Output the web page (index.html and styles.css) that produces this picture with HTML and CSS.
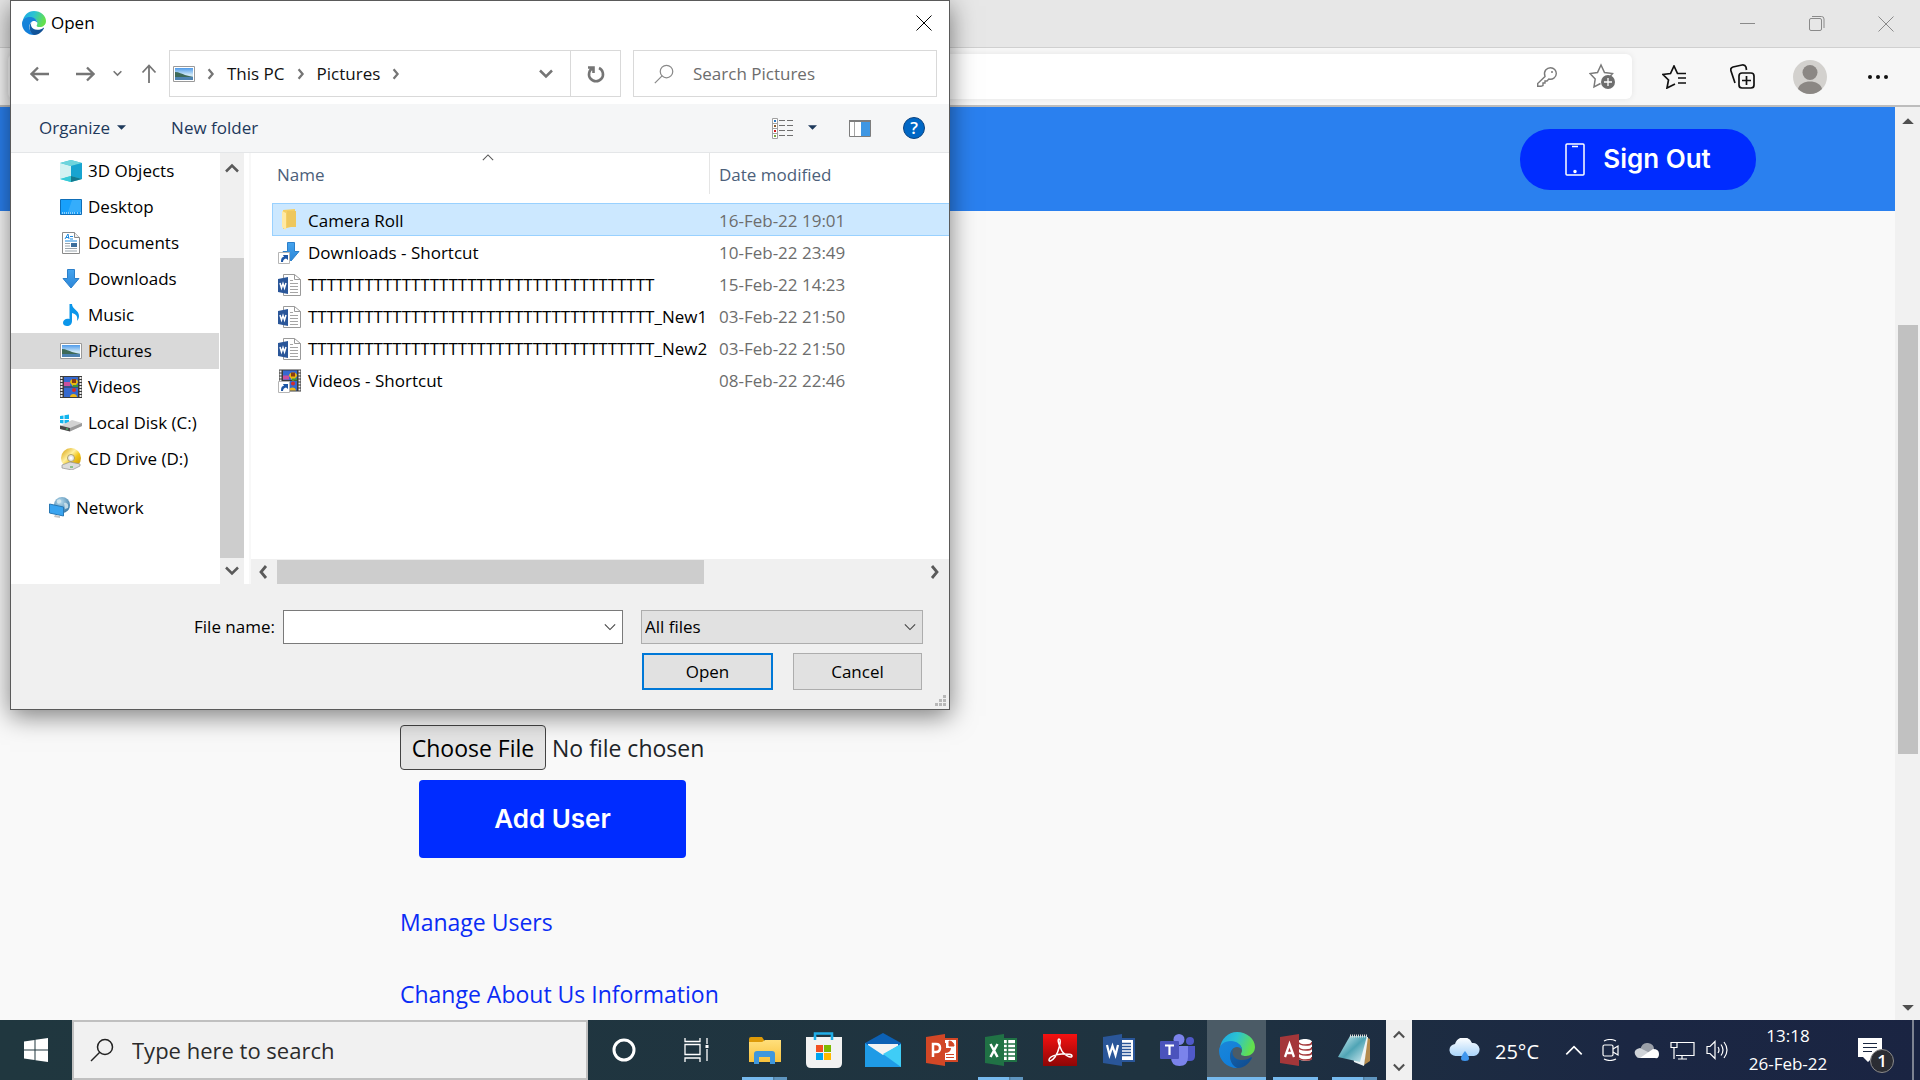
FILE: index.html
```html
<!DOCTYPE html>
<html lang="en">
<head>
<meta charset="utf-8">
<title>Add User</title>
<link rel="stylesheet" href="styles.css">
</head>
<body>
<svg class="defs" width="0" height="0" aria-hidden="true">
  <defs>
    <linearGradient id="gEdgeTop" x1="0" y1="0" x2="1" y2="0.3"><stop offset="0" stop-color="#1ba4e6"/><stop offset=".5" stop-color="#2bc3d2"/><stop offset="1" stop-color="#63e04e"/></linearGradient>
    <linearGradient id="gEdgeMid" x1="0" y1="0" x2=".6" y2="1"><stop offset="0" stop-color="#1a86d8"/><stop offset="1" stop-color="#0f7ddb"/></linearGradient>
    <linearGradient id="gEdgeLow" x1="0" y1="0" x2="1" y2="1"><stop offset="0" stop-color="#1263b0"/><stop offset="1" stop-color="#114a8b"/></linearGradient>
    <linearGradient id="gSky" x1="0" y1="0" x2="0" y2="1"><stop offset="0" stop-color="#4f9bea"/><stop offset=".6" stop-color="#d5ecf8"/><stop offset="1" stop-color="#5d8fb8"/></linearGradient>
    <linearGradient id="gBlue" x1="0" y1="0" x2="0" y2="1"><stop offset="0" stop-color="#45a4ee"/><stop offset="1" stop-color="#2b86d8"/></linearGradient>
    <linearGradient id="gFolder" x1="0" y1="0" x2="0" y2="1"><stop offset="0" stop-color="#ffdf7c"/><stop offset="1" stop-color="#f9c23c"/></linearGradient>
    <linearGradient id="gRed" x1="0" y1="0" x2="0" y2="1"><stop offset="0" stop-color="#f51111"/><stop offset="1" stop-color="#8e0606"/></linearGradient>
    <linearGradient id="gCloud" x1="0" y1="0" x2="0" y2="1"><stop offset="0" stop-color="#ffffff"/><stop offset="1" stop-color="#a9d4fa"/></linearGradient>
    <linearGradient id="gNote" x1="0" y1="0" x2="1" y2="1"><stop offset="0" stop-color="#d5f0f5"/><stop offset=".5" stop-color="#4fa4b5"/><stop offset="1" stop-color="#d8eff4"/></linearGradient>
    <linearGradient id="gDisc" x1="0" y1="0" x2="1" y2="1"><stop offset="0" stop-color="#d49a00"/><stop offset=".4" stop-color="#fff0a0"/><stop offset=".6" stop-color="#f2c71c"/><stop offset="1" stop-color="#c38a00"/></linearGradient>
    <radialGradient id="gGlobe" cx=".4" cy=".3" r=".8"><stop offset="0" stop-color="#b8dcee"/><stop offset="1" stop-color="#2d6f9e"/></radialGradient>
  </defs>
  <symbol id="edge" viewBox="0 0 36 36">
    <path d="M1 16C2 7 9 0 18 0c10 0 18 7 18 15 0 6-5 9-9 9-4 0-5-1-5-2 0-1 1-1 1-4 0-5-5-8-11-8C7 10 3 12 1 16z" fill="url(#gEdgeTop)"/>
    <path d="M0 19c0-6 5-10 12-10 6 0 11 4 11 9-1-2-3-3-5-3-4 0-7 4-7 9 0 6 4 11 11 12-1 0-2 0-4 0C8 36 0 28 0 19z" fill="url(#gEdgeMid)"/>
    <path d="M15 16c-3 3-2 12 8 12 4 0 7-1 9-3 1 0 1 1 1 1-2 4-7 10-14 10C12 35 8 22 15 16z" fill="url(#gEdgeLow)"/>
  </symbol>
  <symbol id="picture" viewBox="0 0 22 16">
    <path d="M.5.5h21v15H.5z" fill="#fff" stroke="#9a9a9a"/>
    <path d="M2 2h18v12H2z" fill="url(#gSky)"/>
    <path d="M2 6c4 0 7 2 10 3l8 2v1H2z" fill="#3e6a58"/><path d="M2 11h18v3H2z" fill="#4d82b0"/>
  </symbol>
  <symbol id="objects" viewBox="0 0 22 22">
    <path d="M0 3l11-3 11 3v16l-11 3-11-3z" fill="#35c6d6"/>
    <path d="M0 3l5 2v13l-5 1z" fill="#a9e6ea"/><path d="M0 3l11 3v10L0 19z" fill="#d3f2f2"/><path d="M0 3l11-3 11 3-11 3z" fill="#6fd4dc"/>
    <path d="M11 6l11-3v16l-11-3z" fill="#18a4d0"/><path d="M0 19l11-3v6z" fill="#37cbd8"/><path d="M11 16l11 3-11 3z" fill="#14798f"/>
  </symbol>
  <symbol id="desktop" viewBox="0 0 22 16">
    <path d="M.5.5h21v15H.5z" fill="#18a0fb" stroke="#0f6eb8"/><path d="M12 1h9v12L8 13z" fill="#4ab5fc" opacity=".6"/><path d="M2 14h14M17 14h2M20 14h1" stroke="#fff" stroke-dasharray="1 1"/>
  </symbol>
  <symbol id="document" viewBox="0 0 18 22">
    <path d="M.5.5h12l5 5v16H.5z" fill="#fff" stroke="#8a8a8a"/><path d="M12.500.5v5h5" fill="#eee" stroke="#8a8a8a"/>
    <path d="M3 7l3-5 1 5M4 5.500h3M8 4.500h3M8 7h3M3 9h12" stroke="#1d8be0" fill="none"/>
    <path d="M3 11.500h5M3 14h5M3 16.500h12M3 19h12" stroke="#9aa5ad"/><path d="M9 11h6v4H9z" fill="#3c6f9d"/>
  </symbol>
  <symbol id="download" viewBox="0 0 18 20">
    <path d="M5.500.5h7v9H17L9 19 1 9.500h4.500z" fill="url(#gBlue)" stroke="#2b7fca"/>
  </symbol>
  <symbol id="music" viewBox="0 0 16 22">
    <path d="M6.500 0h2.500c0 5 7 6 7 12 0 2-1 4-2 5 1-5-1-7-5-8v8c0 3-2 5-5 5-2 0-4-1-4-3 0-3 3-5 6.500-4z" fill="#0b96ea"/>
  </symbol>
  <symbol id="video" viewBox="0 0 22 22">
    <path d="M0 0h22v22H0z" fill="#3b3b3b"/><path d="M4 1h14v9.500H4zM4 11.500h14V21H4z" fill="#3569cf"/>
    <path d="M1.500 1v20M20.500 1v20" stroke="#eee" stroke-width="2" stroke-dasharray="2 1"/>
    <path d="M10 6c0-4 8-4 8 0 0 2-3 3-3 5h-2c0-2-3-3-3-5z" fill="#e8b90f"/><path d="M12 3h4v4h-4z" fill="#8a3b13"/>
    <path d="M4 6h6v4H4z" fill="#c9509e"/><path d="M13 9h5v2h-5z" fill="#3c9a37"/><circle cx="14" cy="14" r="2" fill="#d32d2d"/><path d="M10 21c0-4 7-4 7 0z" fill="#efb716"/>
  </symbol>
  <symbol id="disk" viewBox="0 0 22 18">
    <path d="M0 2l3.500-.5v3.500H0zM4.500 1.300L9 .5V5H4.500zM0 6h3.500v3.500L0 9zM4.500 6H9v4l-4.500-.500z" fill="#13b5ee"/>
    <path d="M0 12l12-6 10 3v3L10 17 0 15z" fill="#d3d3d3"/><path d="M0 11.500l10 2.500v3.500L0 15z" fill="#4a4a4a"/><path d="M10 14l12-5v3l-12 5.500z" fill="#9b9b9b"/><path d="M6 15h2" stroke="#46d36e"/>
  </symbol>
  <symbol id="disc" viewBox="0 0 22 22">
    <circle cx="11" cy="10" r="10" fill="url(#gDisc)"/><circle cx="11" cy="10" r="3.500" fill="#e8e8e8" stroke="#b0a060"/><circle cx="11" cy="10" r="1.500" fill="#fff"/>
    <path d="M2 17l8-3 10 2v2l-8 4-10-2z" fill="#dcdcdc" stroke="#8f8f8f" stroke-width=".7"/><path d="M10 19h3" stroke="#3ca63c"/>
  </symbol>
  <symbol id="network" viewBox="0 0 22 22">
    <circle cx="13" cy="8" r="8" fill="url(#gGlobe)"/><path d="M8 3c3-2 5 0 4 2S7 8 8 3zM15 6c3-1 5 2 4 5l-3 1z" fill="#d7e9ef" opacity=".8"/>
    <path d="M.5 7l14 3v9L.5 16z" fill="#39a4f0" stroke="#2878b4"/><path d="M6 18l5 1v2l-6-1z" fill="#c4c4c4"/>
  </symbol>
  <symbol id="folder" viewBox="0 0 23 23">
    <path d="M5 1l12-1v17L5 20z" fill="#f5cf63"/><path d="M9 2h9v16h-9z" fill="#eec75d"/><path d="M4 2l4 2v17l-4-3z" fill="#ffe9a3"/>
  </symbol>
  <symbol id="shortcut" viewBox="0 0 12 12">
    <path d="M.5.5h11v11H.5z" fill="#fff" stroke="#b5b5b5"/><path d="M3 10c0-4 1-5 3-5L5 3h5v5L8 6.500C6 7 5 8 5 10z" fill="#1d56a5"/>
  </symbol>
  <symbol id="word-doc" viewBox="0 0 23 22">
    <path d="M5.500.5h11l6 5v16h-17z" fill="#fff" stroke="#9a9a9a"/><path d="M16.500.5v5h6" fill="none" stroke="#9a9a9a"/>
    <path d="M12 6.500h3M12 9.500h8M12 12.500h8M12 15.500h8M12 18.500h8" stroke="#a5a5a5"/>
    <path d="M0 5l10-2v17L0 18z" fill="#2a5699"/><path d="M2 9l1.500 5L5 9.500 6.500 14 8 9" fill="none" stroke="#fff" stroke-width="1.500"/>
  </symbol>
  <symbol id="chevron-down" viewBox="0 0 14 10"><path d="M1 1.500l6 6 6-6" fill="none" stroke="currentColor" stroke-width="2.500"/></symbol>
  <symbol id="chevron-up" viewBox="0 0 14 10"><path d="M1 8.500l6-6 6 6" fill="none" stroke="currentColor" stroke-width="2.500"/></symbol>
  <symbol id="chevron-right" viewBox="0 0 10 14"><path d="M2 1l5 6-5 6" fill="none" stroke="currentColor" stroke-width="2.800"/></symbol>
  <symbol id="chevron-left" viewBox="0 0 10 14"><path d="M8 1L3 7l5 6" fill="none" stroke="currentColor" stroke-width="2.800"/></symbol>
  <symbol id="chevron-thin" viewBox="0 0 14 8"><path d="M1 1l6 6 6-6" fill="none" stroke="currentColor" stroke-width="1.300"/></symbol>
  <symbol id="triangle" viewBox="0 0 10 6"><path d="M0 0h10L5 5z" fill="currentColor"/></symbol>
  <symbol id="search" viewBox="0 0 24 24"><circle cx="15" cy="9" r="7.500" fill="none" stroke="currentColor" stroke-width="1.500"/><path d="M10 14L1 23" stroke="currentColor" stroke-width="1.500"/></symbol>
  <symbol id="cross" viewBox="0 0 16 16"><path d="M.5.5l15 15M15.500.5l-15 15" stroke="currentColor" fill="none"/></symbol>
</svg>

<div class="browser">
  <div class="titlebar">
    <button class="window-button" aria-label="Minimize"><svg width="16" height="16"><path d="M0 7.500h15" stroke="#8a8a8a"/></svg></button>
    <button class="window-button" aria-label="Restore"><svg width="16" height="16" fill="none" stroke="#8a8a8a"><rect x=".5" y="2.500" width="12" height="12" rx="1.500"/><path d="M3 .5h9.500q2.500 0 2.500 2.500V12"/></svg></button>
    <button class="window-button" aria-label="Close"><svg width="16" height="16"><use href="#cross"/></svg></button>
  </div>
  <div class="toolbar">
    <div class="address-bar">
      <button class="plain" aria-label="Saved passwords"><svg width="20" height="20" viewBox="0 0 20 20" fill="none" stroke="#7a7a7a" stroke-width="1.400"><path d="M8 9.500C6 4 10 .7 13.500.7c3.500 0 5.800 2.800 5.800 5.800 0 4-3.800 6.500-7.500 5.500L10 14H8v2H6v2.500L4 19.300H.7V16.500z"/><circle cx="15" cy="5" r="1" fill="#7a7a7a" stroke="none"/></svg></button>
      <button class="plain" aria-label="Add this page to favorites"><svg width="27" height="27" viewBox="0 0 27 27"><path d="M11.500 20.500L5 24l1.200-8L1 10.500l7.500-1L12 2l3.500 7.500 8 1-2 2.500" fill="none" stroke="#7a7a7a" stroke-width="1.500"/><circle cx="19" cy="19" r="7" fill="#6e6e6e"/><path d="M19 15v8M15 19h8" stroke="#fff" stroke-width="1.300"/></svg></button>
    </div>
    <button class="tool-button" aria-label="Favorites"><svg width="25" height="24" viewBox="0 0 25 24" fill="none" stroke="#111" stroke-width="1.700"><path d="M13 19l-8 4 1.500-8L1 9.500 8.500 8.500 12 1l3.500 7.500H24M16 13h8M16 18h8"/></svg></button>
    <button class="tool-button" aria-label="Collections"><svg width="25" height="26" viewBox="0 0 25 26" fill="none" stroke="#111" stroke-width="1.700"><rect x="9" y="9" width="15" height="15" rx="3"/><path d="M16.500 12v9M12 16.500h9M5 19L1 7q-1-3 2-4l9-2q3-.5 4 2l.5 3"/></svg></button>
    <button class="tool-button" aria-label="Profile"><svg width="34" height="34" viewBox="0 0 34 34"><circle cx="17" cy="17" r="17" fill="#d3d1ce"/><circle cx="17" cy="12.500" r="7.500" fill="#8b8784"/><path d="M5 29c2-10 22-10 24 0a17 17 0 0 1-24 0z" fill="#8b8784"/></svg></button>
    <button class="tool-button" aria-label="Settings and more"><svg width="20" height="4" fill="#111"><circle cx="2" cy="2" r="2"/><circle cx="10" cy="2" r="2"/><circle cx="18" cy="2" r="2"/></svg></button>
  </div>

  <div class="viewport">
    <div class="page">
      <header class="site-header">
        <button class="sign-out"><svg width="20" height="33" viewBox="0 0 20 33" fill="none" stroke="#fff" stroke-width="1.500"><rect x="1" y="1" width="18" height="31" rx="1"/><path d="M7 3.500h6"/><circle cx="10" cy="28.500" r="1" fill="#fff"/></svg>Sign Out</button>
      </header>
      <main class="form">
        <input type="file" class="file-input" aria-label="User picture">
        <button class="add-user">Add User</button>
        <a class="admin-link" href="#users">Manage Users</a>
        <a class="admin-link" href="#about">Change About Us Information</a>
      </main>
    </div>
    <div class="page-scroll" aria-hidden="true">
      <svg class="flip" width="12" height="7"><use href="#triangle"/></svg>
      <div class="page-thumb"></div>
      <svg width="12" height="7"><use href="#triangle"/></svg>
    </div>
  </div>
</div>

<footer class="taskbar">
  <button class="task-start" aria-label="Start"><svg width="24" height="24" fill="#fff"><path d="M0 3.500L10.500 2v9.500H0zM11.500 1.800L24 0v11.500H11.500zM0 12.500h10.500V22L0 20.500zM11.500 12.500H24V24l-12.500-1.800z"/></svg></button>
  <label class="task-search"><svg width="24" height="24"><use href="#search"/></svg><input type="search" placeholder="Type here to search" aria-label="Type here to search"></label>
  <button class="task-wide" aria-label="Cortana"><svg width="24" height="24"><circle cx="12" cy="12" r="10" fill="none" stroke="#fff" stroke-width="3"/></svg></button>
  <button class="task-wide" aria-label="Task view"><svg width="25" height="24" fill="none" stroke="#fff" stroke-width="1.300"><path d="M1 0v3.500h15V0M1 24v-4h15v4M1 6.500h15v10H1zM23 0v6M23 11v12"/><path d="M21.500 7h3v3h-3z" fill="#fff" stroke="none"/></svg></button>
  <div class="apps">
    <button class="app open many" aria-label="File Explorer"><svg width="32" height="27" viewBox="0 0 32 27"><path d="M0 2q0-2 2-2h11l2 3v4H0z" fill="#dd9a08"/><path d="M0 5h13l3-2h16v22H0z" fill="url(#gFolder)"/><path d="M5 27V17q0-3 3-3h15q3 0 3 3v10h-5v-7H10v7z" fill="#3f97dd"/></svg></button>
    <button class="app" aria-label="Microsoft Store"><svg width="36" height="36" viewBox="0 0 36 36"><path d="M9 7V1.500h17V7" fill="none" stroke="#20aee8" stroke-width="2.500"/><path d="M0 5h36v26q0 5-5 5H5q-5 0-5-5z" fill="#f2f2f2"/><path d="M9 4v4M26 4v4" stroke="#20aee8" stroke-width="2.500"/><path d="M10 13h7v7h-7z" fill="#f25022"/><path d="M18 13h7v7h-7z" fill="#7fba00"/><path d="M10 21h7v7h-7z" fill="#00a4ef"/><path d="M18 21h7v7h-7z" fill="#ffb900"/></svg></button>
    <button class="app" aria-label="Mail"><svg width="36" height="34" viewBox="0 0 36 34"><path d="M0 10L18 0l18 10v5H0z" fill="#0c61b5"/><path d="M3 11h30v8L18 24 3 19z" fill="#f3f3f3"/><path d="M0 10l18 12L36 11v23H0z" fill="#1f9be6"/><path d="M36 11v23L18 21z" fill="#3fcdf6"/></svg></button>
    <button class="app" aria-label="PowerPoint"><svg width="32" height="32" viewBox="0 0 32 32"><path d="M17 4h15v24H17z" fill="#d24726"/><path d="M19 6h11v20H19z" fill="#fff"/><path d="M20 9a5 5 0 1 0 5 5h-5z" fill="#d24726"/><path d="M23 7v5h5a5 5 0 0 0-5-5zM20 20.500h8M20 23.500h8" stroke="#d24726" fill="#d24726"/><path d="M0 3l19-3v32L0 29z" fill="#d24726"/><path d="M7 23V10h3q4 0 4 4t-4 4H7" fill="none" stroke="#fff" stroke-width="2.500"/></svg></button>
    <button class="app open many" aria-label="Excel"><svg width="32" height="32" viewBox="0 0 32 32"><path d="M17 4h15v24H17z" fill="#207245"/><path d="M19 6h11v20H19z" fill="#fff"/><path d="M19 10h11M19 14h11M19 18h11M19 22h11M22.500 6v20" stroke="#207245" stroke-width="1.500"/><path d="M0 3l19-3v32L0 29z" fill="#207245"/><path d="M5.500 10l7 13M12.500 10l-7 13" stroke="#fff" stroke-width="2.500"/></svg></button>
    <button class="app" aria-label="Acrobat Reader"><svg width="34" height="32" viewBox="0 0 34 32"><path d="M0 0h34v32H0z" fill="url(#gRed)"/><path d="M16 5c3 0 0 12-4 18-3 4-6 5-6 3 0-3 7-6 13-6s10 0 10 2c0 3-9-1-11-7-2-4-4-10-2-10z" fill="none" stroke="#fff" stroke-width="1.500"/></svg></button>
    <button class="app" aria-label="Word"><svg width="32" height="32" viewBox="0 0 32 32"><path d="M17 4h15v24H17z" fill="#2a5699"/><path d="M19 6h11v20H19z" fill="#fff"/><path d="M19 9.500h9M19 12.500h9M19 15.500h9M19 18.500h9M19 21.500h9" stroke="#2a5699" stroke-width="1.300"/><path d="M0 3l19-3v32L0 29z" fill="#2a5699"/><path d="M4 11l2.500 10L9.500 12l3 9L15 11" fill="none" stroke="#fff" stroke-width="2.200"/></svg></button>
    <button class="app" aria-label="Teams"><svg width="36" height="32" viewBox="0 0 36 32"><circle cx="30" cy="7" r="4" fill="#5059c9"/><path d="M24 12h11v10q0 5-5 5h-6z" fill="#5059c9"/><circle cx="19" cy="5.500" r="5.500" fill="#7b83eb"/><path d="M11 12h17v11q0 9-8.500 9T11 23z" fill="#7b83eb"/><rect y="7" width="19" height="18" rx="1" fill="#4b53bc"/><path d="M5 11.500h9M9.500 11v10" stroke="#fff" stroke-width="2.200"/></svg></button>
    <button class="app open active" aria-label="Microsoft Edge"><svg width="36" height="36"><use href="#edge"/></svg></button>
    <button class="app open" aria-label="Access"><svg width="32" height="32" viewBox="0 0 32 32"><path d="M18 8v16c2 4 14 4 14 0V8c0-4-14-4-14 0z" fill="#fff"/><path d="M18 8c2 4 14 4 14 0M18 13c2 4 14 4 14 0M18 18c2 4 14 4 14 0M18 23c2 4 14 4 14 0" fill="none" stroke="#a4373a" stroke-width="1.600"/><path d="M0 3l19-3v32L0 29z" fill="#a4373a"/><path d="M5 23l4.500-13L14 23M6.500 19h6" fill="none" stroke="#fff" stroke-width="2.300"/></svg></button>
    <button class="app open many" aria-label="Notepad"><svg width="34" height="32" viewBox="0 0 34 32"><path d="M28 3l4 2v22l-6 4z" fill="#b38a4d"/><path d="M13 2l17 1-4 29-10-4z" fill="#eef4f5"/><path d="M12 2h17l-7 26L0 23z" fill="url(#gNote)"/><path d="M12 2h18" stroke="#ddd" stroke-width="3" stroke-dasharray="1 1"/></svg></button>
  </div>
  <div class="task-stepper">
    <button class="plain" aria-label="Scroll up"><svg width="12" height="9"><use href="#chevron-up"/></svg></button>
    <button class="plain" aria-label="Scroll down"><svg width="12" height="9"><use href="#chevron-down"/></svg></button>
  </div>
  <div class="weather"><svg width="32" height="24" viewBox="0 0 32 24"><path d="M7 18a6 6 0 0 1-1-12 9 9 0 0 1 17-1 6.500 6.500 0 0 1 2 13z" fill="url(#gCloud)"/><path d="M16 13q8 10 0 10t0-10z" fill="#3f96ee"/></svg><span>25°C</span></div>
  <div class="tray">
    <button class="tray-button" aria-label="Show hidden icons"><svg class="flip" width="18" height="11" viewBox="0 0 14 8"><use href="#chevron-thin"/></svg></button>
    <button class="tray-button" aria-label="Meet now"><svg width="17" height="22" viewBox="0 0 17 22" fill="none" stroke="#fff" stroke-width="1.200"><rect x="1" y="6" width="10" height="11" rx="1.500"/><path d="M11 10l5-3v9l-5-3M2 2q6-3 12 0M2 20q6 3 12 0"/></svg></button>
    <button class="tray-button" aria-label="OneDrive"><svg width="25" height="17" viewBox="0 0 25 17"><path d="M6 8Q8 0 14 1t6 6l-8 6z" fill="#9a9fa8"/><path d="M2 14q-4-6 4-8l12 6-8 4H5q-2 0-3-2z" fill="#cfd3d8"/><path d="M6 16l13-9q6 0 6 5t-4 4z" fill="#fff"/></svg></button>
    <button class="tray-button" aria-label="Network"><svg width="25" height="19" viewBox="0 0 25 19" fill="none" stroke="#fff" stroke-width="1.200"><path d="M6 1.500h18v13H6M12 14.500v3.500M8 18h9M4 10v8M1 1.500h6v5H1zM4 6v4"/></svg></button>
    <button class="tray-button" aria-label="Volume"><svg width="24" height="20" viewBox="0 0 24 20" fill="none" stroke="#fff" stroke-width="1.200"><path d="M1 6.500h3l5-5v17l-5-5H1zM12 7q2 3 0 6M15 4.500q4 5.500 0 11M18 2q6 8 0 16"/></svg></button>
  </div>
  <div class="clock"><time>13:18</time><time>26-Feb-22</time></div>
  <button class="notice" aria-label="Notifications"><svg width="24" height="25" viewBox="0 0 24 25"><path d="M0 0h24v19H15l-5 5-5-5H0z" fill="#fff"/><path d="M5 5.500h14M5 9.500h14M5 13.500h9" stroke="#1b2842"/></svg><span class="notice-count">1</span></button>
  <div class="peek"></div>
</footer>

<section class="dialog" role="dialog" aria-label="Open">
  <div class="dialog-title"><svg width="24" height="24"><use href="#edge"/></svg><h1>Open</h1><button class="plain dialog-close" aria-label="Close"><svg width="16" height="16"><use href="#cross"/></svg></button></div>
  <div class="nav-row">
    <div class="nav-buttons">
      <button class="plain" aria-label="Back"><svg width="20" height="16" fill="none" stroke="#757575" stroke-width="2.300"><path d="M19 8H2M8 1.500L1.500 8 8 14.500"/></svg></button>
      <button class="plain" aria-label="Forward"><svg width="20" height="16" fill="none" stroke="#757575" stroke-width="2.300"><path d="M1 8h17M12 1.500L18.500 8 12 14.500"/></svg></button>
      <button class="plain" aria-label="Recent locations"><svg width="9" height="7"><use href="#chevron-down"/></svg></button>
      <button class="plain" aria-label="Up"><svg width="16" height="20" fill="none" stroke="#757575" stroke-width="1.800"><path d="M8 19V2M1.500 8.500L8 1.500l6.500 7"/></svg></button>
    </div>
    <div class="path-box">
      <svg width="22" height="16"><use href="#picture"/></svg>
      <svg class="crumb-arrow" width="8" height="12"><use href="#chevron-right"/></svg>
      <a href="#pc">This PC</a>
      <svg class="crumb-arrow" width="8" height="12"><use href="#chevron-right"/></svg>
      <a href="#pictures">Pictures</a>
      <svg class="crumb-arrow" width="8" height="12"><use href="#chevron-right"/></svg>
      <button class="plain path-more" aria-label="Previous locations"><svg width="14" height="10"><use href="#chevron-down"/></svg></button>
      <button class="plain path-refresh" aria-label="Refresh"><svg width="18" height="18" fill="none" stroke="#757575" stroke-width="2.600"><path d="M12 3a7 7 0 1 1-6 0M1 2.500h5.500V8"/></svg></button>
    </div>
    <label class="find-box"><svg width="20" height="20"><use href="#search"/></svg><input type="text" placeholder="Search Pictures" aria-label="Search Pictures"></label>
  </div>
  <div class="command-row">
    <button class="plain command organize">Organize<svg width="9" height="6"><use href="#triangle"/></svg></button>
    <button class="plain command">New folder</button>
    <div class="view-buttons">
      <button class="plain" aria-label="Change view"><svg width="21" height="21"><path d="M.5.5h5v20h-5zM.5 5.500h5M.5 10.500h5M.5 15.500h5" fill="#fff" stroke="#a0a0a0"/><path d="M7 2.500h14M7 7.500h14M7 12.500h14M7 17.500h14" stroke="#6f6f6f" stroke-dasharray="6 2"/><path d="M2 2h2v2H2z" fill="#2b78c0"/><path d="M2 7h2v2H2z" fill="#8a5a2b"/><path d="M2 12h2v2H2z" fill="#d01c1c"/><path d="M2 17h2v2H2z" fill="#78a83c"/></svg></button>
      <button class="plain view-arrow" aria-label="More views"><svg width="9" height="6"><use href="#triangle"/></svg></button>
      <button class="plain view-pane" aria-label="Preview pane"><svg width="22" height="17"><path d="M.5.5h21v16H.5z" fill="#fff" stroke="#7d7d7d"/><path d="M0 1h22" stroke="#7d7d7d" stroke-width="2"/><path d="M5.500 2v14" stroke="#a5a5a5"/><path d="M12 2h9v14h-9z" fill="#3f97e3"/></svg></button>
      <button class="help" aria-label="Help">?</button>
    </div>
  </div>
  <div class="dialog-body">
    <nav class="tree">
      <a href="#objects"><svg width="22" height="22"><use href="#objects"/></svg>3D Objects</a>
      <a href="#desktop"><svg width="22" height="16"><use href="#desktop"/></svg>Desktop</a>
      <a href="#documents"><svg width="22" height="22"><use href="#document"/></svg>Documents</a>
      <a href="#downloads"><svg width="22" height="20"><use href="#download"/></svg>Downloads</a>
      <a href="#music"><svg width="22" height="22"><use href="#music"/></svg>Music</a>
      <a href="#pictures" class="current"><svg width="22" height="16"><use href="#picture"/></svg>Pictures</a>
      <a href="#videos"><svg width="22" height="22"><use href="#video"/></svg>Videos</a>
      <a href="#c"><svg width="22" height="18"><use href="#disk"/></svg>Local Disk (C:)</a>
      <a href="#d"><svg width="22" height="22"><use href="#disc"/></svg>CD Drive (D:)</a>
      <a href="#network" class="root"><svg width="22" height="22"><use href="#network"/></svg>Network</a>
    </nav>
    <div class="tree-scroll" aria-hidden="true">
      <svg width="14" height="10"><use href="#chevron-up"/></svg>
      <div class="tree-thumb"></div>
      <svg width="14" height="10"><use href="#chevron-down"/></svg>
    </div>
    <div class="files">
      <table>
        <colgroup><col class="col-name"><col></colgroup>
        <thead><tr>
          <th scope="col"><div class="head">Name<svg class="sort flip" width="12" height="7"><use href="#chevron-thin"/></svg></div></th>
          <th scope="col"><div class="head date-head">Date modified</div></th>
        </tr></thead>
        <tbody>
          <tr class="selected"><td><div class="file"><svg width="23" height="23"><use href="#folder"/></svg>Camera Roll</div></td><td>16-Feb-22 19:01</td></tr>
          <tr><td><div class="file"><svg width="23" height="22" viewBox="0 0 23 22"><use href="#download" x="4" width="18" height="20"/><use href="#shortcut" y="10" width="12" height="12"/></svg>Downloads - Shortcut</div></td><td>10-Feb-22 23:49</td></tr>
          <tr><td><div class="file"><svg width="23" height="22"><use href="#word-doc"/></svg>TTTTTTTTTTTTTTTTTTTTTTTTTTTTTTTTTTTTT</div></td><td>15-Feb-22 14:23</td></tr>
          <tr><td><div class="file"><svg width="23" height="22"><use href="#word-doc"/></svg>TTTTTTTTTTTTTTTTTTTTTTTTTTTTTTTTTTTTT_New1</div></td><td>03-Feb-22 21:50</td></tr>
          <tr><td><div class="file"><svg width="23" height="22"><use href="#word-doc"/></svg>TTTTTTTTTTTTTTTTTTTTTTTTTTTTTTTTTTTTT_New2</div></td><td>03-Feb-22 21:50</td></tr>
          <tr><td><div class="file"><svg width="23" height="24" viewBox="0 0 23 24"><use href="#video" x="1" width="22" height="23"/><use href="#shortcut" y="12" width="12" height="12"/></svg>Videos - Shortcut</div></td><td>08-Feb-22 22:46</td></tr>
        </tbody>
      </table>
      <div class="files-scroll" aria-hidden="true">
        <svg width="10" height="14"><use href="#chevron-left"/></svg>
        <div class="files-thumb"></div>
        <svg class="scroll-end" width="10" height="14"><use href="#chevron-right"/></svg>
      </div>
    </div>
  </div>
  <form class="dialog-footer">
    <label for="file-name">File name:</label>
    <div class="combo"><input id="file-name" type="text"><svg width="12" height="8"><use href="#chevron-thin"/></svg></div>
    <div class="combo kind"><select aria-label="File type"><option>All files</option></select><svg width="12" height="8"><use href="#chevron-thin"/></svg></div>
    <div class="actions"><button type="button" class="primary">Open</button><button type="button">Cancel</button></div>
    <svg class="grip" width="12" height="12" fill="#b8b8b8"><path d="M8 0h3v3H8zM4 4h3v3H4zM8 4h3v3H8zM0 8h3v3H0zM4 8h3v3H4zM8 8h3v3H8z"/></svg>
  </form>
</section>
</body>
</html>
```
FILE: styles.css
```css
* { box-sizing: border-box; }
body {
  margin: 0;
  height: 100vh;
  display: flex;
  flex-direction: column;
  overflow: hidden;
  font-family: "Open Sans", "Noto Sans", sans-serif;
  font-size: 17px;
  line-height: 24px;
  color: #000;
}
svg { display: block; flex: none; }
button, input, select { font: inherit; color: inherit; }
button { padding: 0; border: 0; background: none; }
a { color: inherit; text-decoration: none; }
.defs { position: absolute; }
.plain { display: flex; align-items: center; justify-content: center; }
.flip { transform: rotate(180deg); }

/* Browser window */
.browser { flex: 1; min-height: 0; display: flex; flex-direction: column; }
.titlebar { height: 48px; display: flex; justify-content: flex-end; background: #e7e7e7; border-bottom: 1px solid #d0d0d0; color: #8a8a8a; }
.window-button { width: 69px; display: flex; align-items: center; justify-content: center; }
.toolbar { height: 59px; display: flex; align-items: center; padding: 0 8px; background: #f7f7f7; border-bottom: 2px solid #bdbdbd; }
.address-bar { flex: 1; height: 45px; margin-right: 8px; padding: 0 16px; display: flex; align-items: center; justify-content: flex-end; gap: 32px; background: #fff; border-radius: 6px; box-shadow: 0 0 6px rgba(0, 0, 0, .08); }
.tool-button { width: 68px; height: 48px; display: flex; align-items: center; justify-content: center; }

.viewport { flex: 1; min-height: 0; display: flex; }
.page { flex: 1; display: flex; flex-direction: column; background: #f9f9f9; overflow: hidden; }
.site-header { height: 104px; flex: none; padding: 0 139px; display: flex; align-items: center; justify-content: flex-end; background: #2a80ef; }
.sign-out { width: 236px; height: 61px; display: flex; align-items: center; justify-content: center; gap: 18px; border-radius: 30px; background: #002cff; color: #fff; font: 600 26px/30px Inter, sans-serif; }
.form { flex: 1; width: 100%; max-width: 1095px; margin: 0 auto; display: flex; flex-direction: column; justify-content: flex-end; align-items: flex-start; font-size: 23px; line-height: 36px; }
.file-input { color: #212529; margin-bottom: 10px; height: 45px; }
.file-input::file-selector-button { width: 146px; height: 45px; margin: 0 6px 0 0; padding: 0; font: inherit; color: #000; background: #e5e5e5; border: 1px solid #444; border-radius: 4px; }
.add-user { width: 267px; height: 78px; margin: 0 0 46px 19px; border-radius: 4px; background: #002cff; color: #fff; font: 600 26px/30px Inter, sans-serif; }
.admin-link { color: #0a2cf5; margin-bottom: 36px; }
.admin-link:last-child { margin-bottom: 8px; }

.page-scroll { width: 25px; padding: 10px 0 8px; display: flex; flex-direction: column; align-items: center; justify-content: space-between; background: #f1f1f1; color: #505050; }
.page-thumb { width: 20px; height: 48%; margin-top: -50px; background: #c1c1c1; }

/* Taskbar */
.taskbar { height: 60px; flex: none; display: flex; color: #fff; background: linear-gradient(90deg, #20373f, #1f3340 60%, #1b2743 85%, #1a2442); }
.task-start { width: 72px; display: flex; align-items: center; justify-content: center; }
.task-search { width: 516px; padding: 0 16px; display: flex; align-items: center; gap: 18px; border: 2px solid #c0c0c0; background: #f1f1f1; color: #222; font-size: 22px; line-height: 36px; }
.task-search input { flex: 1; min-width: 0; height: 40px; border: 0; padding: 0; background: none; }
.task-search input::placeholder { color: #2b2b2b; opacity: 1; line-height: 36px; }
.task-wide { width: 72px; display: flex; align-items: center; justify-content: center; }
.apps { display: flex; padding-left: 3px; }
.app { width: 59px; display: flex; align-items: center; justify-content: center; background: no-repeat center bottom / 45px 3px; }
.app.open { background-image: linear-gradient(#76b9ed, #76b9ed); }
.app.many { background-image: linear-gradient(90deg, #76b9ed 68%, #4a728f 68%, #5f95bf 74%); }
.app.active { background-color: #4b5b66; background-size: 100% 3px; }
.task-stepper { width: 26px; margin-left: 2px; padding: 10px 0 8px; display: flex; flex-direction: column; align-items: center; justify-content: space-between; background: #f0f0f0; color: #505050; }
.weather { margin-left: auto; width: 107px; display: flex; align-items: center; gap: 14px; font-size: 20px; }
.weather span { padding-top: 4px; }
.tray { display: flex; }
.tray-button { width: 36px; display: flex; align-items: center; justify-content: center; }
.clock { width: 104px; display: flex; flex-direction: column; align-items: center; justify-content: center; gap: 4px; }
.notice { position: relative; width: 72px; padding-left: 18px; display: flex; align-items: center; }
.notice-count { position: absolute; left: 30px; top: 29px; width: 24px; height: 24px; border: 1px solid #8b8b8b; border-radius: 50%; background: #2b2d33; font-size: 17px; font-weight: 600; line-height: 22px; text-align: center; }
.peek { width: 8px; border-left: 2px solid #7d8391; }

/* File dialog */
.dialog { position: absolute; left: 10px; top: 0; width: 940px; display: flex; flex-direction: column; background: #fff; border: 1px solid #5a5a5a; box-shadow: 0 6px 24px rgba(0, 0, 0, .5); }
.dialog-title { height: 48px; padding: 0 17px 4px 11px; display: flex; align-items: center; gap: 5px; }
.dialog-title h1 { margin: 0; font-size: 17px; font-weight: 400; }
.dialog-close { margin-left: auto; }
.nav-row { height: 55px; padding: 1px 12px 7px 19px; display: flex; gap: 12px; }
.nav-buttons { width: 127px; display: flex; align-items: center; justify-content: space-between; color: #757575; }
.nav-buttons .plain:nth-child(2) { margin-left: 6px; }
.path-box { width: 452px; padding-left: 3px; display: flex; align-items: center; border: 1px solid #d9d9d9; color: #757575; }
.path-box a { color: #111; }
.crumb-arrow { margin: 0 12px; }
.path-more { margin-left: auto; width: 48px; }
.path-refresh { width: 50px; height: 45px; border-left: 1px solid #d9d9d9; }
.find-box { flex: 1; padding: 0 20px; display: flex; align-items: center; gap: 19px; border: 1px solid #d9d9d9; color: #8a8a8a; }
.find-box input { flex: 1; min-width: 0; padding: 0; border: 0; background: none; }
.find-box input::placeholder { color: #6d6d6d; opacity: 1; }
.command-row { height: 49px; padding: 0 24px 0 28px; display: flex; align-items: center; gap: 45px; background: #f5f6f7; border-bottom: 1px solid #e4e6e8; color: #1e395b; }
.organize { gap: 7px; }
.view-buttons { margin-left: auto; display: flex; align-items: center; }
.view-arrow { margin-left: 15px; }
.view-pane { margin: 0 32px; }
.help { width: 22px; height: 22px; border-radius: 50%; background: #0067c5; border: 1px solid #0b4380; color: #fff; font-weight: 600; line-height: 20px; }

.dialog-body { height: 431px; display: flex; }
.tree { width: 208px; display: flex; flex-direction: column; }
.tree a { height: 36px; padding-left: 49px; display: flex; align-items: center; gap: 6px; }
.tree .current { background: #d9d9d9; }
.tree .root { margin-top: 13px; padding-left: 38px; gap: 5px; }
.tree-scroll { width: 24px; margin-left: 1px; padding: 10px 0 8px; display: flex; flex-direction: column; align-items: center; background: #f0f0f0; color: #5a5a5a; }
.tree-thumb { width: 24px; height: 300px; margin: auto 0 8px; background: #cdcdcd; }
.files { flex: 1; margin-left: 5px; border-left: 2px solid #f8f8f8; display: flex; flex-direction: column; justify-content: space-between; }
table { margin-left: 21px; table-layout: fixed; border-spacing: 0; }
.col-name { width: 437px; }
th { height: 50px; padding: 0; text-align: left; vertical-align: top; font-weight: 400; color: #4c607a; }
.head { position: relative; height: 41px; padding-left: 5px; line-height: 43px; }
.date-head { border-left: 1px solid #e5e5e5; padding-left: 9px; }
.sort { position: absolute; left: 210px; top: 1px; color: #5a5a5a; }
td { height: 32px; padding: 2px 0 0 10px; border: 0 solid #99d1ff; color: #6d6d6d; }
td:first-child { padding-left: 6px; color: #000; }
.selected td { height: 33px; background: #cce8ff; border-width: 1px 0; }
.selected td:first-child { border-left-width: 1px; padding-left: 5px; }
.file { display: flex; align-items: center; gap: 7px; }
.files-scroll { height: 25px; padding: 0 9px 0 7px; display: flex; align-items: center; background: #f0f0f0; color: #5a5a5a; }
.files-thumb { width: 427px; height: 24px; margin-left: 9px; background: #cdcdcd; }
.scroll-end { margin-left: auto; }

.dialog-footer { position: relative; padding: 26px 26px 19px; display: grid; grid-template-columns: 238px 340px 282px; column-gap: 8px; row-gap: 9px; align-items: center; background: #f0f0f0; }
.dialog-footer label { text-align: right; }
.combo { position: relative; height: 34px; }
.combo.kind { margin-left: 10px; margin-right: -10px; }
.combo input, .combo select { width: 100%; height: 100%; padding: 0 3px; border: 1px solid #7a7a7a; border-radius: 0; background: #fff; appearance: none; }
.combo select { border-color: #adadad; background: #e1e1e1; }
.combo svg { position: absolute; right: 7px; top: 13px; color: #444; }
.actions { grid-column: 3; margin-left: 11px; margin-right: -9px; display: flex; gap: 20px; }
.actions button { flex: 1; height: 37px; border: 1px solid #adadad; background: #e1e1e1; }
.actions .primary { border: 2px solid #0078d7; }
.grip { position: absolute; right: 2px; bottom: 2px; }
```
